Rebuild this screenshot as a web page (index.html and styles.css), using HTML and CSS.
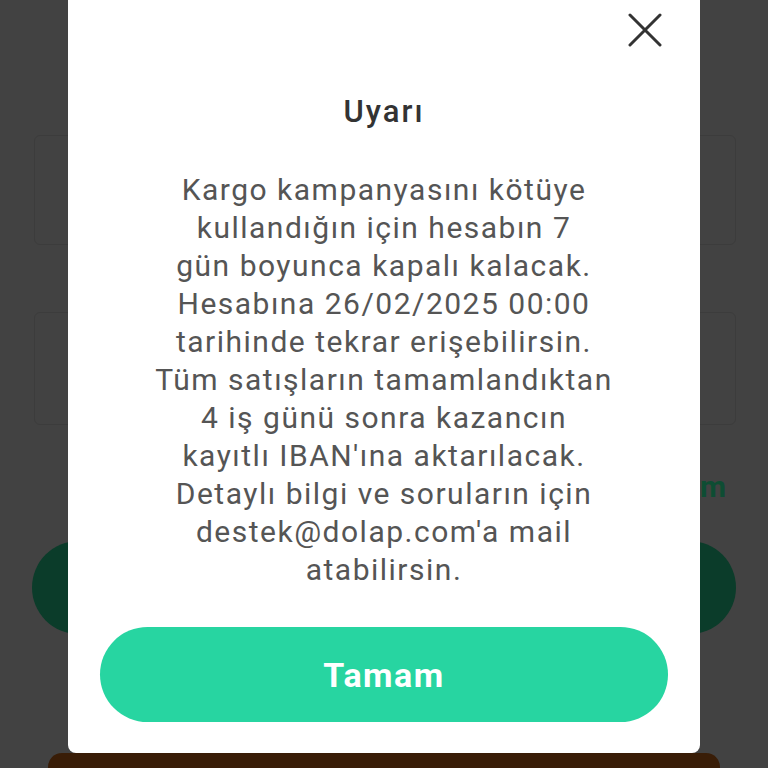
FILE: index.html
```html
<!DOCTYPE html>
<html lang="tr">
<head>
<meta charset="utf-8">
<title>Uyarı</title>
<link rel="stylesheet" href="styles.css">
</head>
<body>
<div class="page">
  <div class="card card-one"></div>
  <div class="card card-two"></div>
  <div class="link-row"><span class="link">Hesabım</span></div>
  <div class="pill-bg"></div>
  <div class="bottom-bar"></div>
</div>

<div class="modal">
  <button class="close" aria-label="Kapat">
    <svg width="34" height="34" viewBox="0 0 34 34"><path d="M2 2 L32 32 M32 2 L2 32" stroke="#333" stroke-width="3" stroke-linecap="round" fill="none"/></svg>
  </button>
  <h1 class="title">Uyarı</h1>
  <p class="message">Kargo kampanyasını kötüye<br>kullandığın için hesabın 7<br>gün boyunca kapalı kalacak.<br>Hesabına 26/02/2025 00:00<br>tarihinde tekrar erişebilirsin.<br>Tüm satışların tamamlandıktan<br>4 iş günü sonra kazancın<br>kayıtlı IBAN'ına aktarılacak.<br>Detaylı bilgi ve soruların için<br>destek@dolap.com'a mail<br>atabilirsin.</p>
  <button class="ok">Tamam</button>
</div>
</body>
</html>
```
FILE: styles.css
```css
html, body {
  margin: 0;
  padding: 0;
}
body {
  width: 768px;
  height: 768px;
  overflow: hidden;
  background: #424242;
  font-family: Roboto, "Noto Sans", sans-serif;
  position: relative;
}
.page {
  display: flex;
  flex-direction: column;
  padding: 135px 32px 0 34px;
  box-sizing: border-box;
}
.page > * {
  flex-shrink: 0;
}
.card {
  height: 110px;
  border: 1px solid #3c3c3c;
  border-radius: 6px;
  box-sizing: border-box;
}
.card-two {
  margin-top: 67px;
  height: 113px;
}
.link-row {
  display: flex;
  justify-content: flex-end;
  margin-top: 44px;
  padding-right: 9px;
  height: 36px;
}
.link {
  font-size: 30px;
  font-weight: 700;
  letter-spacing: 1px;
  color: #0e4d33;
  line-height: 36px;
}
.pill-bg {
  margin-top: 36px;
  height: 93px;
  border-radius: 47px;
  background: #0b3c2a;
  margin-left: -2px;
}
.bottom-bar {
  margin: 119px 16px 0 14px;
  height: 40px;
  border-radius: 14px 14px 0 0;
  background: #391d07;
}
.modal {
  position: absolute;
  left: 68px;
  top: 0;
  width: 632px;
  height: 753px;
  background: #fff;
  border-radius: 0 0 8px 8px;
  display: flex;
  flex-direction: column;
  align-items: center;
  padding: 0 20px;
  box-sizing: border-box;
}
.modal > * {
  flex-shrink: 0;
}
.close {
  align-self: flex-end;
  margin: 13px 18px 0 0;
  width: 34px;
  height: 34px;
  padding: 0;
  border: 0;
  background: none;
  display: block;
}
.close svg {
  display: block;
}
.title {
  margin: 46px 0 0;
  font-size: 31px;
  font-weight: 500;
  letter-spacing: 2px;
  line-height: 38px;
  color: #333;
}
.message {
  margin: 40px 0 0;
  font-size: 30px;
  letter-spacing: 1.5px;
  line-height: 38px;
  color: #555;
  text-align: center;
  white-space: nowrap;
}
.ok {
  margin-top: 38px;
  width: 568px;
  height: 95px;
  border: 0;
  border-radius: 48px;
  background: #27d5a1;
  color: #fff;
  font-family: Roboto, "Noto Sans", sans-serif;
  font-size: 34px;
  font-weight: 700;
  letter-spacing: 1.5px;
}
```
